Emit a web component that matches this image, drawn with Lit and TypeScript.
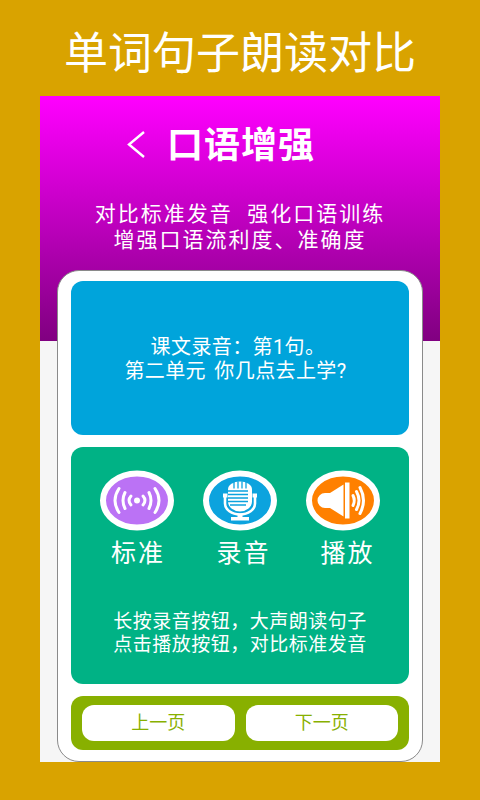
import { LitElement, html, css } from "lit";
import { customElement } from "lit/decorators.js";

const waveIcon = html`<svg viewBox="0 0 74 60" width="74" height="61">
  <ellipse cx="37" cy="30" rx="34" ry="27" fill="#BB72F5" stroke="#fff" stroke-width="6"/>
  <g fill="none" stroke="#fff" stroke-linecap="round" stroke-width="3">
    <path d="M19 18Q11 30 19 42M55 18Q63 30 55 42"/>
    <path d="M25 22Q21 30 25 38M49 22Q53 30 49 38"/>
    <path d="M31 25.500Q27 30 31 34.500M43 25.500Q47 30 43 34.500"/>
  </g>
  <circle cx="37" cy="30" r="3" fill="#fff"/>
</svg>`;

const micIcon = html`<svg viewBox="0 0 74 60" width="74" height="61">
  <ellipse cx="37" cy="30" rx="34" ry="27" fill="#0CA3DE" stroke="#fff" stroke-width="6"/>
  <path d="M25 19a12 8 0 0 1 24 0v12a12 10 0 0 1-24 0z" fill="#fff"/>
  <g stroke="#0CA3DE" stroke-width="1.300">
    <path d="M25 20.500h20M25 24h20M25 27.500h20M25 31h20M27 34.500h16"/>
    <path d="M31 11v7M35 11v7M39 11v7M43 11v7"/>
  </g>
  <path d="M22 25v8a15 11 0 0 0 30 0v-8" fill="none" stroke="#fff" stroke-width="2.600"/>
  <path d="M20 23h4.500v4h-4.500zM49.500 23h4.500v4h-4.500z" fill="#fff"/>
  <path d="M34.500 43h5v5h-5zM28 46.500h18v3.500H28z" fill="#fff"/>
</svg>`;

const speakerIcon = html`<svg viewBox="0 0 74 60" width="74" height="61">
  <ellipse cx="37" cy="30" rx="34" ry="27" fill="#FF8000" stroke="#fff" stroke-width="6"/>
  <path d="M24 22.500H19a7.500 7.500 0 0 0 0 15h5z" fill="#fff"/>
  <path d="M24 22.500L37.500 14V46L24 37.500z" fill="#fff"/>
  <path d="M39 12h4.500v36H39z" fill="#fff"/>
  <g fill="none" stroke="#fff" stroke-linecap="round" stroke-width="3">
    <path d="M47 25Q49.500 30 47 35"/>
    <path d="M50.500 21Q55.500 30 50.500 39"/>
    <path d="M54 17Q61 30 54 43"/>
  </g>
</svg>`;

@customElement("app-root")
export class AppRoot extends LitElement {
  static styles = css`
    :host {
      display: block;
      width: 480px;
      height: 800px;
      background: #d9a300;
      font-family: Roboto, "Noto Sans CJK SC", "Noto Sans", sans-serif;
      color: #fff;
      overflow: hidden;
    }
    .banner {
      height: 96px;
      box-sizing: border-box;
      padding-top: 12px;
      text-align: center;
      font-size: 44px;
      line-height: 84px;
    }
    .phone {
      position: relative;
      margin: 0 40px;
      height: 666px;
      background: #f6f6f6;
    }
    .grad {
      position: absolute;
      left: 0;
      top: 0;
      right: 0;
      height: 245px;
      background: linear-gradient(#ff00ff, #800080);
    }
    .content {
      position: relative;
      display: flex;
      flex-direction: column;
      height: 100%;
    }
    .nav {
      display: flex;
      align-items: center;
      height: 50px;
      margin-top: 24px;
      padding-left: 85px;
      gap: 20px;
    }
    .nav svg { display: block; }
    .nav-title {
      font-size: 36px;
      font-weight: 700;
      line-height: 50px;
      letter-spacing: 1px;
      margin-top: 2px;
    }
    .sub {
      margin-top: 31px;
      text-align: center;
      font-size: 21px;
      line-height: 26px;
      letter-spacing: 2px;
    }
    .card {
      margin: 17px 17px 0;
      flex: 1;
      box-sizing: border-box;
      background: #fff;
      border: 1px solid #8a8a8a;
      border-radius: 22px;
      padding: 10px 13px 11px;
      display: flex;
      flex-direction: column;
      gap: 12px;
    }
    .lesson {
      height: 154px;
      box-sizing: border-box;
      padding: 2px 9px 0 0;
      border-radius: 12px;
      background: #00a4db;
      display: flex;
      flex-direction: column;
      align-items: center;
      justify-content: center;
      font-size: 20px;
      line-height: 24px;
      letter-spacing: 0.4px;
      word-spacing: 3px;
    }
    .lesson .first { margin-left: 5px; }
    .practice {
      height: 237px;
      border-radius: 12px;
      background: #00b285;
      display: flex;
      flex-direction: column;
      align-items: center;
    }
    .tools {
      display: flex;
      justify-content: center;
      gap: 29px;
      margin-top: 23px;
    }
    .tool {
      width: 74px;
      display: flex;
      flex-direction: column;
      align-items: center;
    }
    .tool svg { display: block; }
    .tool span {
      margin-top: 8px;
      font-size: 25px;
      line-height: 30px;
      letter-spacing: 2px;
      white-space: nowrap;
    }
    .tool.a span { margin-left: 2px; }
    .tool.b span { margin-left: 7px; }
    .tool.c span { margin-left: 9px; }
    .hint {
      margin-top: 41px;
      text-align: center;
      font-size: 19px;
      line-height: 23px;
      letter-spacing: 0.5px;
    }
    .pager {
      height: 54px;
      box-sizing: border-box;
      border-radius: 12px;
      background: #88b000;
      padding: 9px 11px;
      display: flex;
      gap: 11px;
    }
    .pager div {
      flex: 1;
      height: 36px;
      background: #fff;
      border-radius: 12px;
      color: #88b000;
      font-size: 18px;
      line-height: 36px;
      text-align: center;
    }
  `;

  render() {
    return html`
      <div class="banner">单词句子朗读对比</div>
      <div class="phone">
        <div class="grad"></div>
        <div class="content">
          <div class="nav">
            <svg viewBox="0 0 22 30" width="22" height="30"><path d="M19 2L4 14.500L19 27" fill="none" stroke="#fff" stroke-width="2.400"/></svg>
            <span class="nav-title">口语增强</span>
          </div>
          <div class="sub">对比标准发音&nbsp;&nbsp;强化口语训练<br />增强口语流利度、准确度</div>
          <div class="card">
            <div class="lesson">
              <div class="first">课文录音：第1句。</div>
              <div>第二单元 你几点去上学?</div>
            </div>
            <div class="practice">
              <div class="tools">
                <div class="tool a">${waveIcon}<span>标准</span></div>
                <div class="tool b">${micIcon}<span>录音</span></div>
                <div class="tool c">${speakerIcon}<span>播放</span></div>
              </div>
              <div class="hint">长按录音按钮，大声朗读句子<br />点击播放按钮，对比标准发音</div>
            </div>
            <div class="pager"><div>上一页</div><div>下一页</div></div>
          </div>
        </div>
      </div>
    `;
  }
}
